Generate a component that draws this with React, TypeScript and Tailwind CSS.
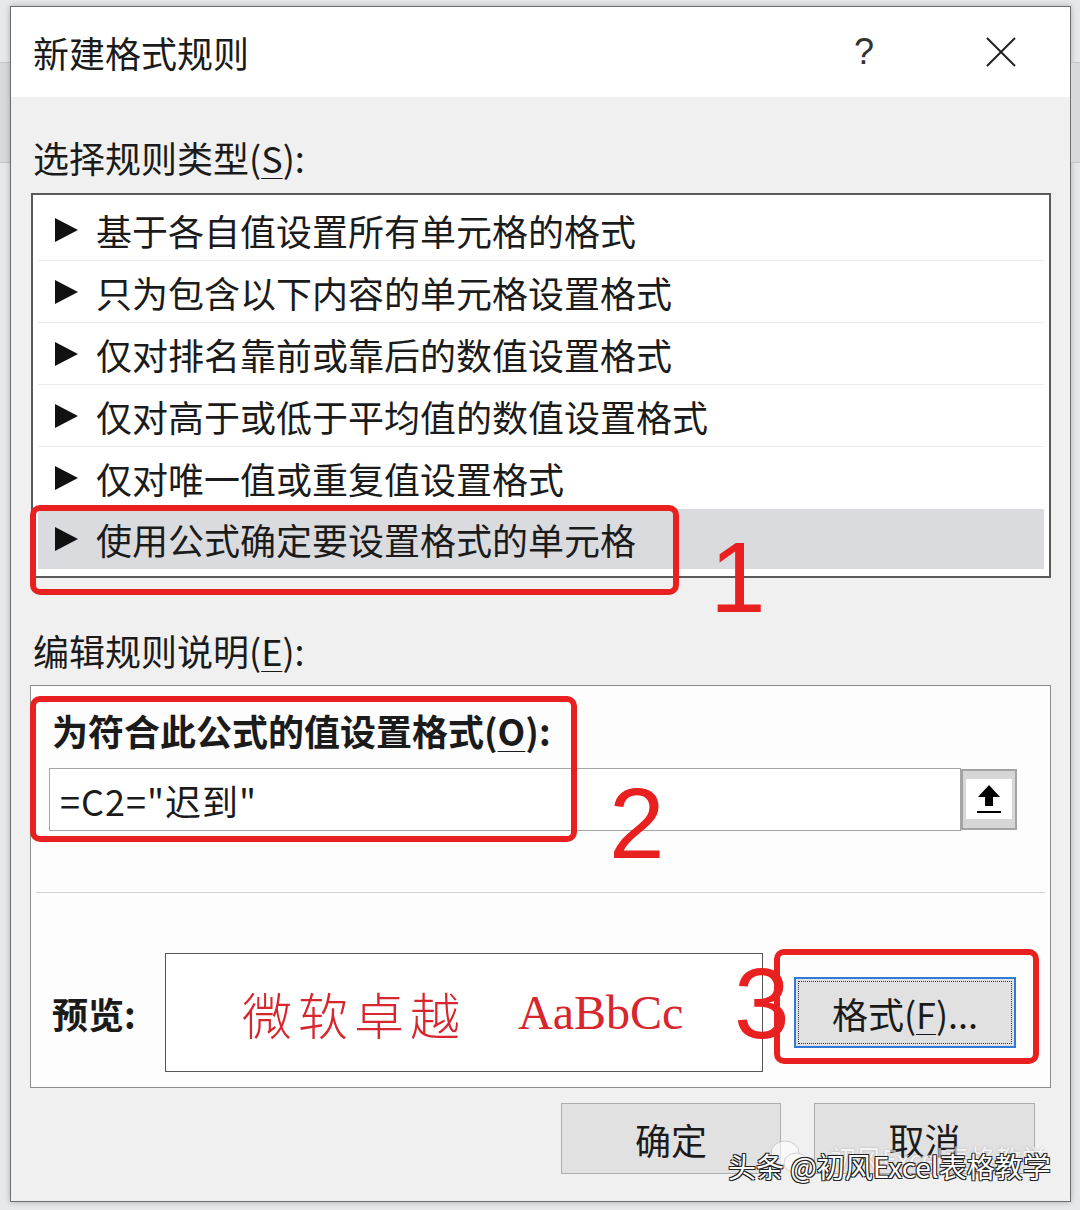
import React from 'react';

const rules = [
  '基于各自值设置所有单元格的格式',
  '只为包含以下内容的单元格设置格式',
  '仅对排名靠前或靠后的数值设置格式',
  '仅对高于或低于平均值的数值设置格式',
  '仅对唯一值或重复值设置格式',
  '使用公式确定要设置格式的单元格',
];

const Key = ({ ch }: { ch: string }) => (
  <span className="underline decoration-1 underline-offset-[5px]">{ch}</span>
);

const Arrow = () => (
  <svg width="23" height="24" viewBox="0 0 23 24" className="shrink-0">
    <polygon points="0,0 23,12 0,24" fill="#111" />
  </svg>
);

const App: React.FC = () => {
  return (
    <div className="relative w-[1080px] h-[1210px] overflow-hidden bg-[#e7e8ea] pt-[6px] flex font-['Noto_Sans_CJK_SC',sans-serif] text-[#1b1b1b]">
      {/* excel window behind, left */}
      <div className="w-[10px] flex flex-col">
        <div className="h-[56px]" />
        <div className="h-[101px] bg-[#d8d9db] border-y border-[#c4c5c7]" />
      </div>

      {/* dialog */}
      <div className="w-[1061px] h-[1196px] border border-[#6e6e6e] bg-[#f0f0f0] flex flex-col shadow-[0_0_6px_rgba(0,0,0,0.25)]">
        {/* title bar */}
        <div className="h-[90px] bg-white flex items-center justify-between pl-[22px] pr-[54px]">
          <div className="text-[36px] leading-[48px]">新建格式规则</div>
          <div className="flex items-center gap-[112px]">
            <span className="font-['Liberation_Sans',sans-serif] text-[36px] text-[#333] leading-none">?</span>
            <svg width="30" height="30" viewBox="0 0 30 30">
              <path d="M1 1 L29 29 M29 1 L1 29" stroke="#222" strokeWidth="2" />
            </svg>
          </div>
        </div>

        <div className="pl-[20px] flex flex-col">
          <div className="ml-[2px] mt-[36px] text-[36px] leading-[48px]">
            选择规则类型(<Key ch="S" />):
          </div>

          {/* rule list */}
          <div className="mt-[12px] w-[1020px] h-[385px] border-2 border-[#5a5a5a] bg-white pt-[4px] px-[5px]">
            {rules.map((r, i) => (
              <div
                key={r}
                className={`flex items-center gap-[18px] pl-[17px] text-[36px] ${
                  i < 4 ? 'h-[62px] border-b border-[#ebebeb]' : i === 4 ? 'h-[62px]' : 'h-[60px] bg-[#dadbdf]'
                }`}
              >
                <Arrow />
                <span className="leading-none">{r}</span>
              </div>
            ))}
          </div>

          <div className="ml-[2px] mt-[48px] text-[36px] leading-[48px]">
            编辑规则说明(<Key ch="E" />):
          </div>

          {/* rule description */}
          <div className="mt-[11px] -ml-[1px] w-[1021px] h-[403px] border border-[#8c8c8c] bg-[#fdfdfd] flex flex-col">
            <div className="pl-[21px] pt-[20px] text-[36px] leading-[48px] font-bold">
              为符合此公式的值设置格式(<Key ch="O" />):
            </div>
            <div className="mt-[14px] ml-[18px] flex">
              <div className="w-[912px] h-[63px] border border-[#a5a5a5] bg-white flex items-center pl-[10px] text-[36px] tracking-[1px]">
                =C2="迟到"
              </div>
              <div className="mt-[1px] w-[56px] h-[61px] border-2 border-[#a3a3a3] bg-[#d6d6d6] px-[3px] pt-[8px]">
                <div className="h-[40px] bg-white flex items-center justify-center">
                  <svg width="26" height="30" viewBox="0 0 26 30">
                    <polygon points="13,1 24,13 17,13 17,22 9,22 9,13 2,13" fill="#000" />
                    <rect x="1" y="27" width="24" height="2" fill="#000" />
                  </svg>
                </div>
              </div>
            </div>

            <div className="mt-[61px] mx-[5px] h-px bg-[#d2d2d2]" />

            <div className="mt-[60px] pl-[21px] flex items-center">
              <div className="w-[113px] text-[36px] font-bold leading-none">预览:</div>
              <div className="w-[598px] h-[119px] border border-[#555] bg-white flex items-center pl-[76px] text-[#d7262d]">
                <span className="text-[50px] font-light tracking-[6px] leading-none">微软卓越</span>
                <span className="ml-[52px] font-['Liberation_Serif',serif] text-[48px] leading-none">AaBbCc</span>
              </div>
              <div className="ml-[31px] w-[222px] h-[71px] border-2 border-[#2f7bd6] bg-[#e1e1e1] p-[2px]">
                <div className="h-full border border-dotted border-[#333] flex items-center justify-center text-[36px] leading-none">
                  格式(<Key ch="F" />)...
                </div>
              </div>
            </div>
          </div>

          {/* buttons */}
          <div className="mt-[15px] flex justify-end gap-[33px] pr-[35px]">
            <div className="w-[220px] h-[71px] border border-[#adadad] bg-[#e1e1e1] flex items-center justify-center text-[36px]">确定</div>
            <div className="w-[221px] h-[71px] border border-[#adadad] bg-[#e1e1e1] flex items-center justify-center text-[36px]">取消</div>
          </div>
        </div>
      </div>

      {/* excel window behind, right */}
      <div className="w-[9px] flex flex-col">
        <div className="h-[56px]" />
        <div className="h-[101px] bg-[#d8d9db] border-y border-[#c4c5c7]" />
      </div>

      {/* red annotations */}
      <div className="absolute left-[30px] top-[505px] w-[649px] h-[90px] border-[6px] border-[#e8201f] rounded-[10px]" />
      <div className="absolute left-[30px] top-[696px] w-[547px] h-[146px] border-[6px] border-[#e8201f] rounded-[10px]" />
      <div className="absolute left-[774px] top-[949px] w-[265px] h-[115px] border-[6px] border-[#e8201f] rounded-[10px]" />
      <div className="absolute left-[710px] top-[527px] font-['Liberation_Sans',sans-serif] text-[100px] leading-none text-[#e8201f]">1</div>
      <div className="absolute left-[609px] top-[773px] font-['Liberation_Sans',sans-serif] text-[100px] leading-none text-[#e8201f]">2</div>
      <div className="absolute left-[734px] top-[953px] font-['Liberation_Sans',sans-serif] text-[100px] leading-none text-[#e8201f]">3</div>

      {/* watermark */}
      <div className="absolute left-[770px] top-[1138px] flex items-center gap-[20px] opacity-60">
        <svg width="40" height="38" viewBox="0 0 40 38">
          <ellipse cx="15" cy="14" rx="14" ry="12" fill="#fff" stroke="#bbb" strokeWidth="1" />
          <ellipse cx="26" cy="24" rx="12" ry="10" fill="#fff" stroke="#bbb" strokeWidth="1" />
        </svg>
        <span className="text-[26px] text-white [text-shadow:0_0_2px_#888]">初风Excel表格教学</span>
      </div>
      <div className="absolute left-[728px] top-[1152px] text-[28px] leading-none text-white [text-shadow:1px_1px_0_#222,-1px_-1px_0_#222,1px_-1px_0_#222,-1px_1px_0_#222]">
        头条 @初风Excel表格教学
      </div>
    </div>
  );
};

export default App;
